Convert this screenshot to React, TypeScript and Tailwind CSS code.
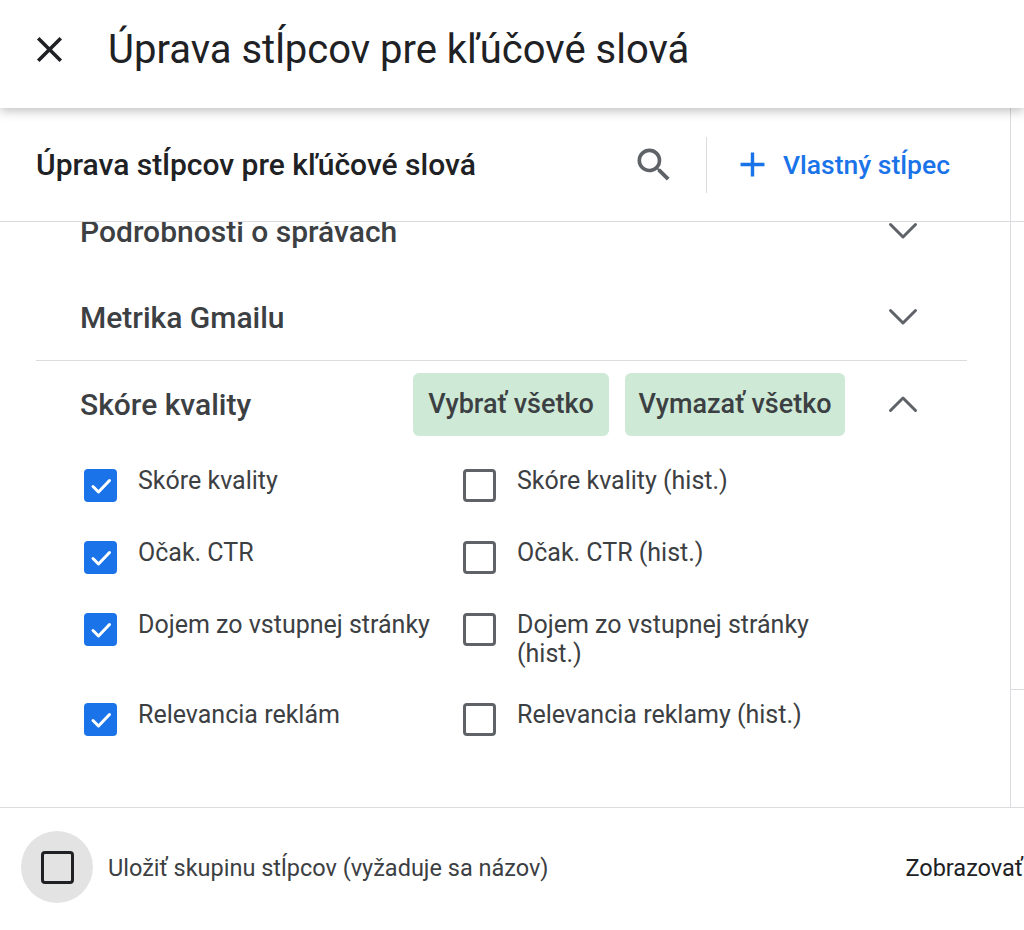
import React from "react";

const font = "font-['Roboto','Noto_Sans',sans-serif]";

function Chevron({ up = false }: { up?: boolean }) {
  return (
    <svg width="30" height="18" viewBox="0 0 30 18" className="shrink-0">
      <path
        d={up ? "M2.5 15.5 L15 3 L27.5 15.5" : "M2.5 2.5 L15 15 L27.5 2.5"}
        fill="none"
        stroke="#5f6368"
        strokeWidth="3"
        strokeLinecap="round"
        strokeLinejoin="round"
      />
    </svg>
  );
}

function Box({ checked }: { checked: boolean }) {
  return (
    <div className="h-[40px] w-[33px] shrink-0 pt-[3px]">
      {checked ? (
        <div className="grid h-[33px] w-[33px] place-items-center rounded-[4px] bg-[#1a73e8]">
          <svg width="24" height="24" viewBox="0 0 24 24">
            <path d="M4 12.5 L9.5 18 L20.5 6.5" fill="none" stroke="#fff" strokeWidth="3" strokeLinecap="round" strokeLinejoin="round" />
          </svg>
        </div>
      ) : (
        <div className="h-[33px] w-[33px] rounded-[4px] border-[3px] border-[#5f6368] bg-white" />
      )}
    </div>
  );
}

const items: [string, boolean][] = [
  ["Skóre kvality", true],
  ["Skóre kvality (hist.)", false],
  ["Očak. CTR", true],
  ["Očak. CTR (hist.)", false],
  ["Dojem zo vstupnej stránky", true],
  ["Dojem zo vstupnej stránky (hist.)", false],
  ["Relevancia reklám", true],
  ["Relevancia reklamy (hist.)", false],
];

function Group({ title }: { title: string }) {
  return (
    <div className="flex h-[86px] items-center pl-[44px] pr-[49px]">
      <span className="flex-1 text-[30px] font-medium text-[#3c4043]">{title}</span>
      <Chevron />
    </div>
  );
}

export default function App() {
  return (
    <div className={`h-[930px] w-[1024px] overflow-hidden bg-white flex flex-col ${font}`}>
      <header className="relative z-10 flex h-[108px] shrink-0 items-center bg-white pb-[9px] shadow-[0_3px_10px_rgba(0,0,0,0.25)]">
        <svg width="43" height="43" viewBox="0 0 24 24" className="ml-[28px]">
          <path fill="#202124" d="M19 6.41L17.59 5 12 10.59 6.41 5 5 6.41 10.59 12 5 17.59 6.41 19 12 13.41 17.59 19 19 17.59 13.41 12z" />
        </svg>
        <h1 className="ml-[37px] text-[40px] text-[#202124]">Úprava stĺpcov pre kľúčové slová</h1>
      </header>

      <div className="flex h-[699px] shrink-0">
        <div className="flex w-[1011px] flex-col border-r border-[#dadce0]">
          <div className="flex h-[114px] shrink-0 items-center border-b border-[#dadce0] pl-[36px] pr-[60px]">
            <span className="flex-1 text-[30px] font-medium text-[#202124]">Úprava stĺpcov pre kľúčové slová</span>
            <svg width="44" height="44" viewBox="0 0 24 24">
              <path fill="#5f6368" d="M15.5 14h-.79l-.28-.27A6.471 6.471 0 0016 9.5 6.5 6.5 0 109.5 16c1.61 0 3.09-.59 4.23-1.57l.27.28v.79l5 4.99L20.49 19l-4.99-5zm-6 0C7.01 14 5 11.99 5 9.5S7.01 5 9.5 5 14 7.01 14 9.5 11.99 14 9.5 14z" />
            </svg>
            <div className="ml-[30px] h-[56px] w-px bg-[#dadce0]" />
            <svg width="41" height="41" viewBox="0 0 24 24" className="ml-[25px]">
              <path fill="#1a73e8" d="M19 13h-6v6h-2v-6H5v-2h6V5h2v6h6v2z" />
            </svg>
            <span className="ml-[10px] text-[26.5px] font-medium text-[#1a73e8]">Vlastný stĺpec</span>
          </div>

          <div className="flex-1 overflow-hidden">
            <div className="-mt-[34px] ml-[36px] w-[931px]">
              <Group title="Podrobnosti o správach" />
              <Group title="Metrika Gmailu" />
              <div className="h-px bg-[#dadce0]" />
              <div className="flex h-[86px] items-center pl-[44px] pr-[49px]">
                <span className="flex-1 text-[30px] font-medium text-[#3c4043]">Skóre kvality</span>
                <button className="h-[63px] w-[196px] rounded-[6px] bg-[#ceead6] text-[27px] font-medium text-[#3c4043]">Vybrať všetko</button>
                <button className="ml-[16px] h-[63px] w-[220px] rounded-[6px] bg-[#ceead6] text-[27px] font-medium text-[#3c4043]">Vymazať všetko</button>
                <div className="ml-[43px]"><Chevron up /></div>
              </div>
              <div className="mt-[19px] grid w-[806px] grid-cols-[379px_379px] pl-[48px]">
                {items.map(([label, checked]) => (
                  <div key={label} className="flex items-start gap-[21px] pb-[32px]">
                    <Box checked={checked} />
                    <span className="pr-[20px] text-[25px] leading-[29px] text-[#3c4043]">{label}</span>
                  </div>
                ))}
              </div>
            </div>
          </div>
        </div>
        <div className="flex-1">
          <div className="h-[114px] border-b border-[#dadce0]" />
          <div className="h-[468px] border-b border-[#dadce0]" />
        </div>
      </div>

      <footer className="flex flex-1 items-start border-t border-[#dadce0] pt-[23px]">
        <div className="ml-[21px] grid h-[72px] w-[72px] shrink-0 place-items-center rounded-full bg-[#e3e3e3]">
          <div className="h-[33px] w-[33px] rounded-[4px] border-[3px] border-[#202124]" />
        </div>
        <span className="ml-[15px] mt-[20px] text-[23.5px] text-[#3c4043]">Uložiť skupinu stĺpcov (vyžaduje sa názov)</span>
        <span className="ml-auto mt-[20px] whitespace-nowrap pr-[1px] text-[23.5px] text-[#202124]">Zobrazovať</span>
      </footer>
    </div>
  );
}
